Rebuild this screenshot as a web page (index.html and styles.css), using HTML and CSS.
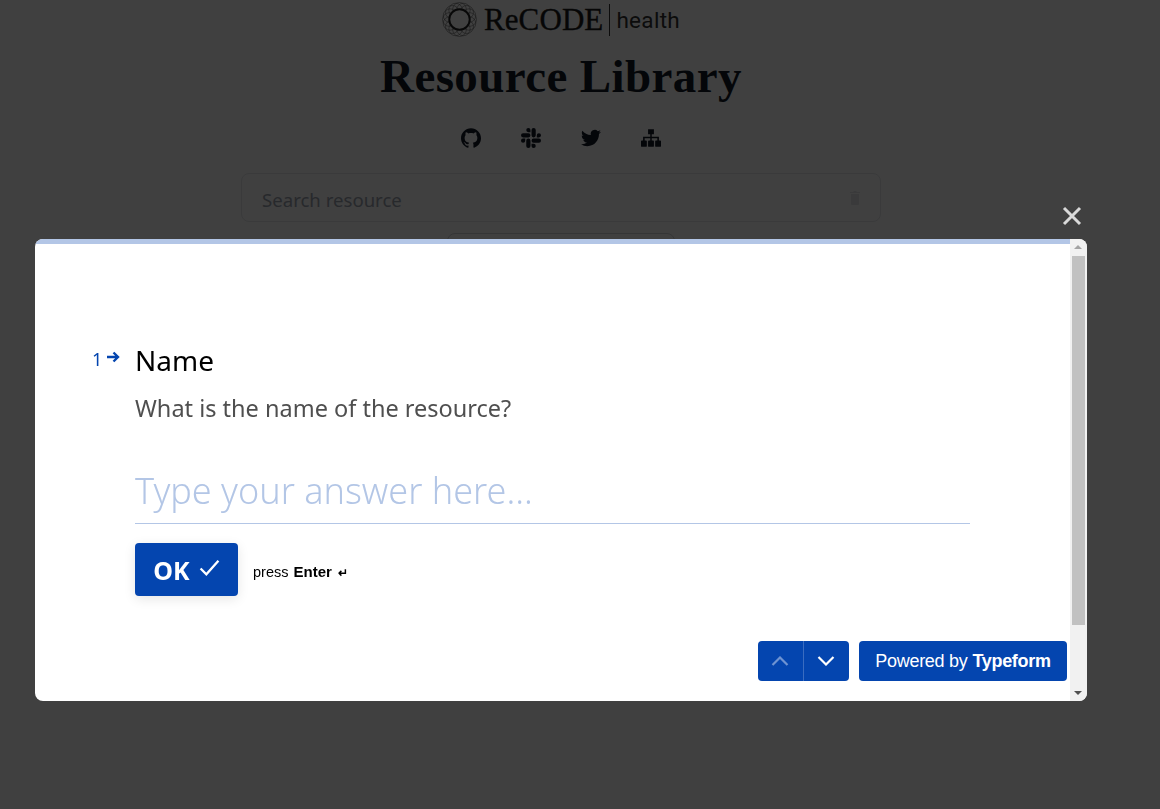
FILE: index.html
```html
<!DOCTYPE html>
<html lang="en">
<head>
<meta charset="utf-8">
<title>Resource Library</title>
<link rel="stylesheet" href="styles.css">
</head>
<body>
<main class="page">
  <div class="logo">
    <svg class="logo-mark" viewBox="0 0 36 36" aria-hidden="true">
      <g class="lace">
        <circle cx="18" cy="7.500" r="7"/><circle cx="18" cy="28.500" r="7"/><circle cx="7.500" cy="18" r="7"/><circle cx="28.500" cy="18" r="7"/>
        <circle cx="10.600" cy="10.600" r="7"/><circle cx="25.400" cy="10.600" r="7"/><circle cx="10.600" cy="25.400" r="7"/><circle cx="25.400" cy="25.400" r="7"/>
        <circle cx="14" cy="8.300" r="7"/><circle cx="22" cy="8.300" r="7"/><circle cx="14" cy="27.700" r="7"/><circle cx="22" cy="27.700" r="7"/>
        <circle cx="8.300" cy="14" r="7"/><circle cx="8.300" cy="22" r="7"/><circle cx="27.700" cy="14" r="7"/><circle cx="27.700" cy="22" r="7"/>
      </g>
      <circle class="lace-core" cx="18" cy="18" r="10.500"/>
    </svg>
    <span class="logo-name">ReCODE</span>
    <span class="logo-health">health</span>
  </div>
  <h1 class="title">Resource Library</h1>
  <div class="socials">
    <svg class="social" viewBox="0 0 24 24"><path d="M12 .297c-6.63 0-12 5.373-12 12 0 5.303 3.438 9.8 8.205 11.385.6.113.82-.258.82-.577 0-.285-.01-1.04-.015-2.04-3.338.724-4.042-1.61-4.042-1.61C4.422 18.07 3.633 17.7 3.633 17.7c-1.087-.744.084-.729.084-.729 1.205.084 1.838 1.236 1.838 1.236 1.07 1.835 2.809 1.305 3.495.998.108-.776.417-1.305.76-1.605-2.665-.3-5.466-1.332-5.466-5.93 0-1.31.465-2.38 1.235-3.22-.135-.303-.54-1.523.105-3.176 0 0 1.005-.322 3.3 1.23.96-.267 1.98-.399 3-.405 1.02.006 2.04.138 3 .405 2.28-1.552 3.285-1.23 3.285-1.23.645 1.653.24 2.873.12 3.176.765.84 1.23 1.91 1.23 3.22 0 4.61-2.805 5.625-5.475 5.92.42.36.81 1.096.81 2.22 0 1.606-.015 2.896-.015 3.286 0 .315.21.69.825.57C20.565 22.092 24 17.592 24 12.297c0-6.627-5.373-12-12-12"/></svg>
    <svg class="social" viewBox="0 0 24 24"><path d="M5.042 15.165a2.528 2.528 0 0 1-2.52 2.523A2.528 2.528 0 0 1 0 15.165a2.527 2.527 0 0 1 2.522-2.52h2.52v2.52zM6.313 15.165a2.527 2.527 0 0 1 2.521-2.52 2.527 2.527 0 0 1 2.521 2.52v6.313A2.528 2.528 0 0 1 8.834 24a2.528 2.528 0 0 1-2.521-2.522v-6.313zM8.834 5.042a2.528 2.528 0 0 1-2.521-2.52A2.528 2.528 0 0 1 8.834 0a2.528 2.528 0 0 1 2.521 2.522v2.52H8.834zM8.834 6.313a2.528 2.528 0 0 1 2.521 2.521 2.528 2.528 0 0 1-2.521 2.521H2.522A2.528 2.528 0 0 1 0 8.834a2.528 2.528 0 0 1 2.522-2.521h6.312zM18.956 8.834a2.528 2.528 0 0 1 2.522-2.521A2.528 2.528 0 0 1 24 8.834a2.528 2.528 0 0 1-2.522 2.521h-2.522V8.834zM17.688 8.834a2.528 2.528 0 0 1-2.523 2.521 2.527 2.527 0 0 1-2.52-2.521V2.522A2.527 2.527 0 0 1 15.165 0a2.528 2.528 0 0 1 2.523 2.522v6.312zM15.165 18.956a2.528 2.528 0 0 1 2.523 2.522A2.528 2.528 0 0 1 15.165 24a2.527 2.527 0 0 1-2.52-2.522v-2.522h2.52zM15.165 17.688a2.527 2.527 0 0 1-2.52-2.523 2.526 2.526 0 0 1 2.52-2.52h6.313A2.527 2.527 0 0 1 24 15.165a2.528 2.528 0 0 1-2.522 2.523h-6.313z"/></svg>
    <svg class="social" viewBox="0 0 24 24"><path d="M23.953 4.57a10 10 0 01-2.825.775 4.958 4.958 0 002.163-2.723c-.951.555-2.005.959-3.127 1.184a4.92 4.92 0 00-8.384 4.482C7.69 8.095 4.067 6.13 1.64 3.162a4.822 4.822 0 00-.666 2.475c0 1.71.87 3.213 2.188 4.096a4.904 4.904 0 01-2.228-.616v.06a4.923 4.923 0 003.946 4.827 4.996 4.996 0 01-2.212.085 4.936 4.936 0 004.604 3.417 9.867 9.867 0 01-6.102 2.105c-.39 0-.779-.023-1.17-.067a13.995 13.995 0 007.557 2.209c9.053 0 13.998-7.496 13.998-13.985 0-.21 0-.42-.015-.63A9.935 9.935 0 0024 4.59z"/></svg>
    <svg class="social" viewBox="0 0 24 24"><path d="M8.500 1.500h7v6h-2.600v3h8.600v4.500h1.500a1 1 0 0 1 1 1v5.500a1 1 0 0 1-1 1h-5a1 1 0 0 1-1-1V16a1 1 0 0 1 1-1h1.600v-2.600h-6.700V15h1.600a1 1 0 0 1 1 1v5.500a1 1 0 0 1-1 1h-5a1 1 0 0 1-1-1V16a1 1 0 0 1 1-1h1.600v-2.600H4.400V15H6a1 1 0 0 1 1 1v5.500a1 1 0 0 1-1 1H1a1 1 0 0 1-1-1V16a1 1 0 0 1 1-1h1.500v-4.500h8.600v-3H8.500z"/></svg>
  </div>
  <div class="search">
    <span class="search-text">Search resource</span>
    <svg class="search-icon" viewBox="0 0 10 14"><path d="M1 3h8v10a1 1 0 0 1-1 1H2a1 1 0 0 1-1-1zM0 1h3l1-1h2l1 1h3v1H0z"/></svg>
  </div>
  <div class="add-button"></div>
</main>

<div class="overlay">
  <svg class="close" viewBox="0 0 20 20" aria-label="Close"><path d="M2 2l16 16M18 2L2 18"/></svg>
  <section class="modal">
    <div class="form">
      <div class="progress"></div>
      <div class="question">
        <div class="number">1<svg class="arrow" viewBox="0 0 14 12"><path d="M1 6h11M7.500 1.500L12 6l-4.500 4.500"/></svg></div>
        <div class="body">
          <h2 class="label">Name</h2>
          <p class="hint">What is the name of the resource?</p>
          <div class="answer">Type your answer here...</div>
          <div class="actions">
            <button class="ok" type="button">OK<svg class="check" viewBox="0 0 20 16"><path d="M1.500 9l5.500 5.500L18.500 1.500"/></svg></button>
            <span class="press">press <b class="press-key">Enter</b> <span class="enter">↵</span></span>
          </div>
        </div>
      </div>
      <div class="footer">
        <div class="nav">
          <span class="nav-btn nav-up"><svg class="chev chev-dim" viewBox="0 0 18 10"><path d="M1.500 9L9 1.500 16.500 9"/></svg></span>
          <span class="nav-btn"><svg class="chev" viewBox="0 0 18 10"><path d="M1.500 1L9 8.500 16.500 1"/></svg></span>
        </div>
        <div class="powered">Powered by <b>Typeform</b></div>
      </div>
    </div>
    <aside class="scrollbar">
      <span class="sb-arrow sb-arrow-up"></span>
      <span class="sb-thumb"></span>
      <span class="sb-arrow sb-arrow-down"></span>
    </aside>
  </section>
</div>
</body>
</html>
```
FILE: styles.css
```css
* { box-sizing: border-box; }
html, body { margin: 0; height: 100%; }
body { background: #fff; overflow: hidden; font-family: "Noto Sans", sans-serif; }

.page { width: 1122px; display: flex; flex-direction: column; align-items: center; }
.logo { height: 39px; display: flex; align-items: center; }
.logo-mark { width: 35px; height: 35px; margin-right: 7px; }
.lace { fill: none; stroke: #333; stroke-width: .45; }
.lace-core { fill: #fff; stroke: #222; stroke-width: 2; }
.logo-name { font-family: "Liberation Serif", serif; font-size: 31px; color: #1a1a1a; letter-spacing: .1px; -webkit-text-stroke: .35px #1a1a1a; border-right: 1px solid #333; padding-right: 6px; margin-right: 6px; line-height: 32px; }
.logo-health { font-family: "Roboto", sans-serif; font-size: 22.500px; color: #333; letter-spacing: .3px; }
.title { margin: 10px 0 0; font-family: "Liberation Serif", serif; font-weight: 700; font-size: 47px; line-height: 54px; color: #111827; letter-spacing: .4px; }
.socials { display: flex; gap: 40px; margin-top: 25px; height: 20px; }
.social { width: 20px; height: 20px; fill: #111827; }
.search { margin-top: 25px; width: 640px; height: 49px; border: 1px solid #e5e7eb; border-radius: 8px; display: flex; align-items: center; justify-content: space-between; padding: 3px 20px 0; }
.search-text { font-size: 18.600px; color: #9ca3af; }
.search-icon { width: 10px; height: 14px; fill: #e5e7eb; margin-top: -3px; }
.add-button { margin-top: 11px; width: 228px; height: 50px; border: 1px solid #d1d5db; border-radius: 8px; }

.overlay { position: fixed; inset: 0; background: rgba(0, 0, 0, .75); }
.close { position: absolute; left: 1062px; top: 206px; width: 20px; height: 20px; fill: none; stroke: #d9d9d9; stroke-width: 3; }
.modal { position: absolute; left: 35px; top: 239px; width: 1052px; height: 462px; background: #fff; border-radius: 8px; overflow: hidden; display: flex; }

.form { flex: 1; display: flex; flex-direction: column; }
.progress { height: 5px; background: #b3c6e6; }
.question { display: flex; padding: 96px 0 0 57px; flex: 1; }
.number { width: 43px; padding-top: 8px; font-size: 18px; line-height: 22px; color: #0445af; display: flex; align-items: flex-start; gap: 4px; }
.arrow { width: 14px; height: 12px; margin-top: 3px; fill: none; stroke: #0445af; stroke-width: 2.400; }
.body { width: 835px; }
.label { margin: 0; font-weight: 400; font-size: 28px; line-height: 40px; color: #000; }
.hint { margin: 12px 0 0; font-size: 23.500px; line-height: 33px; color: #4f4f4f; }
.answer { margin-top: 41px; height: 58px; border-bottom: 1px solid #b3c6e6; font-size: 36px; font-weight: 300; line-height: 50px; color: #b3c6e6; }
.actions { display: flex; align-items: center; margin-top: 19px; gap: 15px; }
.ok { width: 103px; height: 53px; border: 0; border-radius: 4px; background: #0445af; color: #fff; font-family: "Noto Sans", sans-serif; font-weight: 700; font-size: 25px; display: flex; align-items: center; justify-content: center; gap: 9px; padding: 0; box-shadow: 0 3px 12px rgba(0, 0, 0, .1); }
.check { width: 21px; height: 17px; fill: none; stroke: #fff; stroke-width: 2.200; margin-top: -4px; }
.press { font-family: "Liberation Sans", sans-serif; font-size: 14.500px; color: #000; padding-top: 4px; }
.press-key { font-size: 15px; margin: 0 2px 0 1px; }
.enter { font-size: 12px; font-weight: 700; }

.footer { display: flex; justify-content: flex-end; gap: 10px; padding: 0 3px 20px 0; }
.nav { display: flex; height: 40px; border-radius: 4px; overflow: hidden; background: #0445af; }
.nav-btn { width: 45.500px; display: flex; align-items: center; justify-content: center; }
.nav-up { border-right: 1px solid #3a6cc0; }
.chev { width: 18px; height: 10px; fill: none; stroke: #fff; stroke-width: 2.200; }
.chev-dim { stroke: #6e93d2; }
.powered { width: 208px; height: 40px; border-radius: 4px; background: #0445af; color: #fff; font-family: "Liberation Sans", sans-serif; font-size: 18px; letter-spacing: -.3px; display: flex; align-items: center; justify-content: center; gap: 5px; }

.scrollbar { width: 17px; background: #f1f1f1; display: flex; flex-direction: column; align-items: stretch; }
.sb-thumb { height: 369px; background: #c1c1c1; margin: 0 2px auto 2px; }
.sb-arrow { height: 17px; position: relative; flex: none; }
.sb-arrow::after { content: ""; position: absolute; left: 4px; width: 0; height: 0; border-left: 4px solid transparent; border-right: 4px solid transparent; }
.sb-arrow-up::after { top: 6px; border-bottom: 4px solid #a3a3a3; }
.sb-arrow-down::after { top: 7px; border-top: 4px solid #505050; }
```
